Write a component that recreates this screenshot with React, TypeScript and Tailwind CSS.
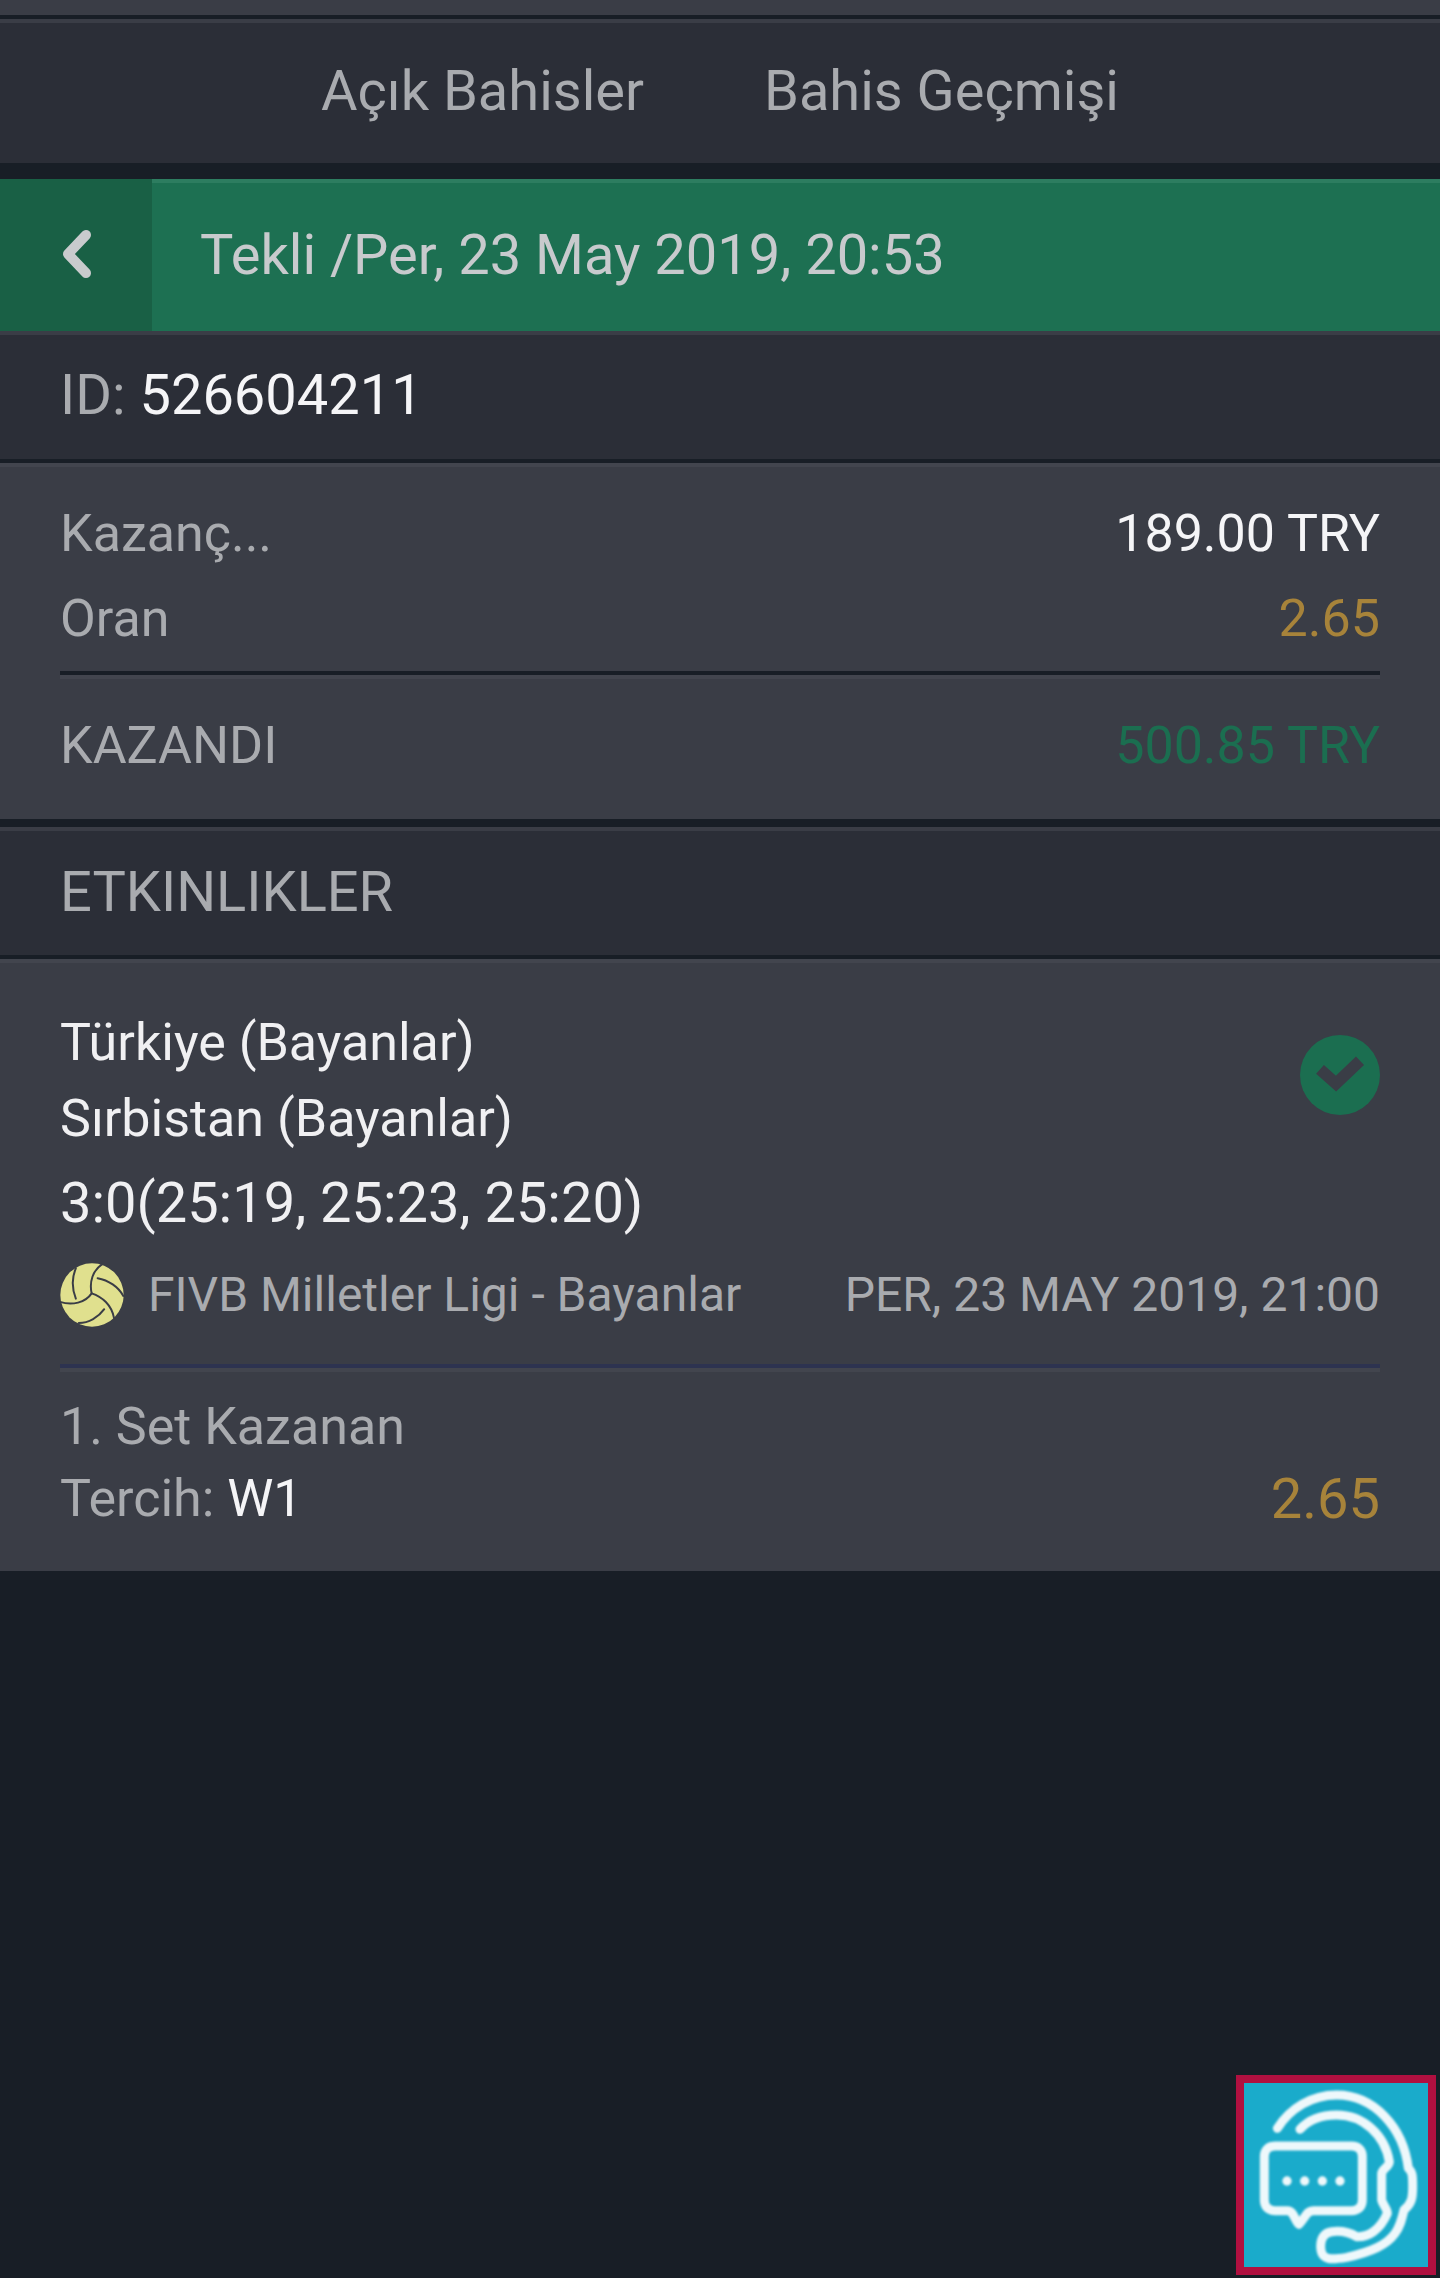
import React from "react";

function Ball() {
  return (
    <svg viewBox="85 65 200 200" className="w-[66px] h-[66px] shrink-0 -ml-[1px]">
      <circle cx="185" cy="165" r="96" fill="#e0e08e" />
      <g fill="none" stroke="#3a3d46" strokeWidth="6" strokeLinecap="round">
        <path d="M136 84C124 112 124 145 136 176" />
        <path d="M88 186C125 198 165 188 184 160" />
        <path d="M215 72C188 90 176 125 184 160C215 170 245 195 252 236" />
        <path d="M202 114C235 120 265 140 280 168" />
        <path d="M145 250C175 250 205 232 222 208" />
      </g>
    </svg>
  );
}

function Check() {
  return (
    <svg viewBox="90 75 240 240" className="w-20 h-20 shrink-0 self-start mt-[30px]">
      <circle cx="210" cy="195" r="120" fill="#1b6e50" />
      <path d="M150 178L198 221L270 152" fill="none" stroke="#3a3d46" strokeWidth="35" strokeLinejoin="miter" />
    </svg>
  );
}

function Chat() {
  return (
    <div className="absolute right-[4px] bottom-[3px] w-[200px] h-[200px] border-[8px] border-[#b01040] bg-[#1aabcb]">
      <svg viewBox="132 129 552 552" className="w-full h-full block">
        <defs>
          <filter id="soft" x="-5%" y="-5%" width="110%" height="110%">
            <feGaussianBlur stdDeviation="2.5" />
          </filter>
        </defs>
        <g filter="url(#soft)">
          <g fill="none" stroke="#eef8fb" strokeWidth="27" strokeLinecap="round" strokeLinejoin="round">
            <path d="M232 265C270 205 335 165 410 165C520 165 610 260 625 385C637 395 638 405 638 440C638 475 635 490 612 510C605 540 600 560 585 580C560 615 515 635 440 652C415 656 395 658 385 655C365 650 362 635 362 618C362 595 372 578 395 575C420 572 445 575 470 590C505 592 540 570 562 520C562 505 548 495 545 480L545 400C548 385 568 380 568 365C555 285 490 225 410 225C365 225 325 240 300 268" />
            <path d="M225 318H455C475 318 487 330 487 350V480C487 500 475 512 455 512H340C320 512 318 530 297 553C285 545 282 512 262 512H225C205 512 193 500 193 480V350C193 330 205 318 225 318Z" />
          </g>
          <g fill="#eef8fb">
            <circle cx="261" cy="423" r="14" />
            <circle cx="314" cy="423" r="14" />
            <circle cx="367" cy="423" r="14" />
            <circle cx="420" cy="423" r="14" />
          </g>
        </g>
      </svg>
    </div>
  );
}

export default function App() {
  return (
    <div className="relative w-[1440px] h-[2278px] overflow-hidden bg-[#181e26] font-[Roboto] text-[#a9abaf]">
      <div className="h-[15px] bg-[#3a3d46]" />
      <div className="h-[4px]" />

      <nav className="h-[144px] border-t-4 border-[#3a3d46] bg-[#2b2e37] flex items-center justify-center gap-[120px] text-[56px] pb-[4px]">
        <span>Açık Bahisler</span>
        <span>Bahis Geçmişi</span>
      </nav>
      <div className="h-[16px]" />

      <header className="h-[152px] border-t-4 border-[#2d7d60] bg-[#1d7052] flex text-[#c8cacd]">
        <div className="w-[152px] -mt-[4px] flex items-center pl-[62px] bg-[#196045] pb-[2px]">
          <svg width="30" height="48" viewBox="0 0 30 48" fill="none">
            <path d="M24 5L6 24L24 43" stroke="#c9cbcd" strokeWidth="10" strokeLinecap="round" strokeLinejoin="round" />
          </svg>
        </div>
        <div className="flex items-center pl-[48px] text-[56px] pb-[4px]">Tekli /Per, 23 May 2019, 20:53</div>
      </header>

      <section className="h-[128px] border-t-4 border-[#3a3d46] bg-[#2b2e37] flex items-center px-[60px] text-[56px] pb-[4px]">
        <span>
          ID: <span className="text-[#f5f5f7]">526604211</span>
        </span>
      </section>

      <section className="border-t-4 border-[#181e26]">
        <div className="h-[356px] border-t-4 border-[#42454e] bg-[#3a3d46] px-[60px] pt-[24px] text-[52px]">
          <div className="h-[85px] flex items-center justify-between">
            <span>Kazanç...</span>
            <span className="text-[#f5f5f7]">189.00 TRY</span>
          </div>
          <div className="h-[85px] flex items-center justify-between">
            <span>Oran</span>
            <span className="text-[#a7833a]">2.65</span>
          </div>
          <div className="mt-[10px] border-t-4 border-[#181e26]">
            <div className="border-t-4 border-[#42454e] h-[134px] flex items-center justify-between pt-[4px]">
              <span>KAZANDI</span>
              <span className="text-[#1b6e50]">500.85 TRY</span>
            </div>
          </div>
        </div>
      </section>

      <section className="border-t-8 border-[#181e26]">
        <div className="h-[128px] border-t-4 border-[#3a3d46] bg-[#2b2e37] flex items-center px-[60px] text-[56px] pb-[2px]">
          ETKINLIKLER
        </div>
      </section>

      <section className="border-t-4 border-[#181e26]">
        <div className="h-[612px] border-t-4 border-[#42454e] bg-[#3a3d46] px-[60px] pt-[42px]">
          <div className="flex items-center justify-between">
            <div className="text-[52px] leading-[76px] text-[#f0f0f2]">
              <div>Türkiye (Bayanlar)</div>
              <div>Sırbistan (Bayanlar)</div>
            </div>
            <Check />
          </div>
          <div className="text-[56px] leading-[84px] text-[#f0f0f2] mt-[4px]">3:0(25:19, 25:23, 25:20)</div>
          <div className="mt-[10px] flex items-center justify-between text-[48px] h-[80px]">
            <div className="flex items-center gap-[23px]">
              <Ball />
              <span>FIVB Milletler Ligi - Bayanlar</span>
            </div>
            <span>PER, 23 MAY 2019, 21:00</span>
          </div>
          <div className="mt-[29px] border-t-4 border-[#2d3350]">
            <div className="border-t-4 border-[#42454e] pt-[19px]">
              <div className="text-[52px] leading-[72px]">1. Set Kazanan</div>
              <div className="flex items-center justify-between text-[52px] leading-[72px]">
                <span>
                  Tercih: <span className="text-[#f5f5f7]">W1</span>
                </span>
                <span className="text-[56px] text-[#a7833a]">2.65</span>
              </div>
            </div>
          </div>
        </div>
      </section>

      <Chat />
    </div>
  );
}
